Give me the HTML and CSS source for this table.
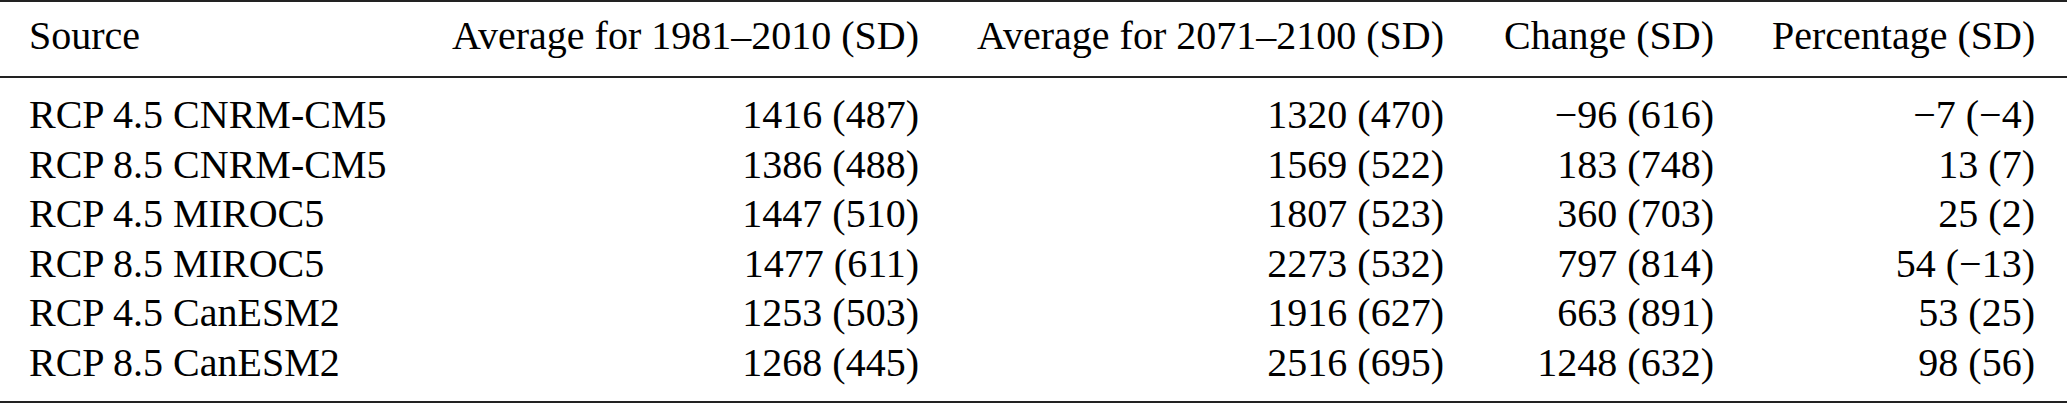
FILE: index.html
```html
<!DOCTYPE html>
<html lang="en">
<head>
    <meta charset="UTF-8">
    <meta name="viewport" content="width=device-width, initial-scale=1.0">
    <title>Precipitation change</title>
    <link rel="stylesheet" href="styles.css">
</head>
<body>

    <table class="data-table">
        <colgroup>
            <col class="col-source">
            <col class="col-past">
            <col class="col-future">
            <col class="col-change">
            <col class="col-pct">
        </colgroup>
        <thead>
            <tr>
                <th class="left">Source</th>
                <th>Average for 1981&ndash;2010 (SD)</th>
                <th>Average for 2071&ndash;2100 (SD)</th>
                <th>Change (SD)</th>
                <th>Percentage (SD)</th>
            </tr>
        </thead>
        <tbody>
            <tr>
                <td class="left">RCP 4.5 CNRM-CM5</td>
                <td>1416 (487)</td>
                <td>1320 (470)</td>
                <td>&minus;96 (616)</td>
                <td>&minus;7 (&minus;4)</td>
            </tr>
            <tr>
                <td class="left">RCP 8.5 CNRM-CM5</td>
                <td>1386 (488)</td>
                <td>1569 (522)</td>
                <td>183 (748)</td>
                <td>13 (7)</td>
            </tr>
            <tr>
                <td class="left">RCP 4.5 MIROC5</td>
                <td>1447 (510)</td>
                <td>1807 (523)</td>
                <td>360 (703)</td>
                <td>25 (2)</td>
            </tr>
            <tr>
                <td class="left">RCP 8.5 MIROC5</td>
                <td>1477 (611)</td>
                <td>2273 (532)</td>
                <td>797 (814)</td>
                <td>54 (&minus;13)</td>
            </tr>
            <tr>
                <td class="left">RCP 4.5 CanESM2</td>
                <td>1253 (503)</td>
                <td>1916 (627)</td>
                <td>663 (891)</td>
                <td>53 (25)</td>
            </tr>
            <tr>
                <td class="left">RCP 8.5 CanESM2</td>
                <td>1268 (445)</td>
                <td>2516 (695)</td>
                <td>1248 (632)</td>
                <td>98 (56)</td>
            </tr>
        </tbody>
    </table>

</body>
</html>
```

FILE: styles.css
```css
body {
    margin: 0;
    padding: 0;
    background-color: #ffffff;
    color: #000;
    font-family: "Liberation Serif", "Times New Roman", Times, serif;
}

.data-table {
    width: 2067px;
    table-layout: fixed;
    border-collapse: collapse;
    font-size: 40px;
    border-bottom: 2px solid #222;
}

.col-source { width: 417px; }
.col-past { width: 531px; }
.col-future { width: 525px; }
.col-change { width: 270px; }
.col-pct { width: 324px; }

.data-table thead tr {
    border-top: 2px solid #222;
    border-bottom: 2px solid #222;
}

.data-table th {
    font-weight: normal;
    text-align: right;
    white-space: nowrap;
    line-height: 50px;
    padding: 9px 29px 15px;
}

.data-table td {
    text-align: right;
    white-space: nowrap;
    line-height: 49.6px;
    padding: 0 29px;
}

.data-table th:last-child,
.data-table td:last-child {
    padding-right: 32px;
}

.data-table .left {
    text-align: left;
}

.data-table tbody tr:first-child td {
    padding-top: 12px;
}

.data-table tbody tr:last-child td {
    padding-bottom: 13px;
}
```
